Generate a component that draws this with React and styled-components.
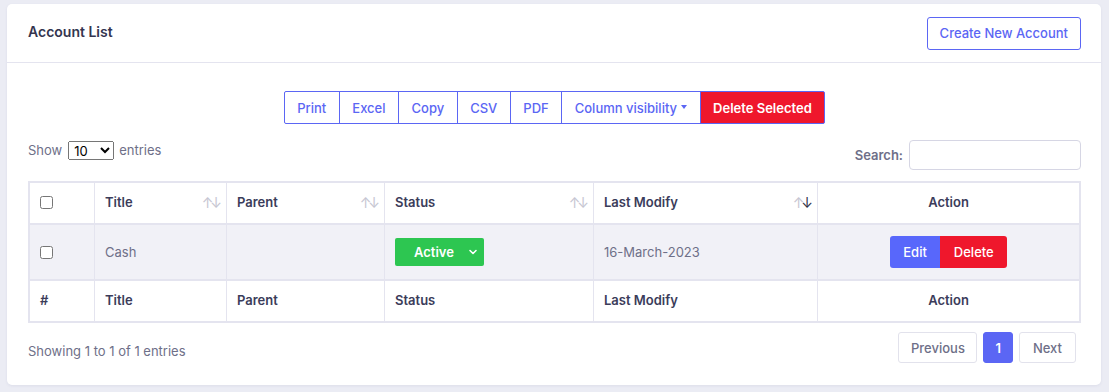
import React from 'react';
import styled, { createGlobalStyle } from 'styled-components';

const Global = createGlobalStyle`
  body {
    margin: 0;
    background: #ebecf4;
    font-family: Inter, "Noto Sans", sans-serif;
    color: #3b3c5a;
  }
`;

const Page = styled.div`
  padding: 4px 8px 6px 7px;
`;

const Card = styled.section`
  background: #fff;
  border-radius: 5px;
  box-shadow: 0 1px 3px rgba(60, 60, 110, 0.08);
`;

const CardHeader = styled.header`
  display: flex;
  align-items: center;
  justify-content: space-between;
  height: 58px;
  padding: 0 20px 0 21px;
  border-bottom: 1px solid #e4e4ef;
`;

const CardTitle = styled.h5`
  margin: 0 0 3px;
  font-size: 14px;
  font-weight: 600;
  color: #34354f;
`;

const OutlineButton = styled.button`
  height: 33px;
  padding: 0 12px;
  background: #fff;
  border: 1px solid #5b66f4;
  border-radius: 3px;
  color: #5b66f4;
  font: 500 13px Inter, sans-serif;
`;

const CardBody = styled.div`
  padding: 28px 20px 22px 21px;
`;

const ToolGroup = styled.div`
  display: flex;
  justify-content: center;
`;

const ToolButton = styled.button`
  height: 33px;
  padding: 0 12.5px;
  background: ${p => (p.$danger ? '#ef172c' : '#fff')};
  border: 1px solid #5b66f4;
  margin-left: -1px;
  color: ${p => (p.$danger ? '#fff' : '#5b66f4')};
  font: ${p => (p.$danger ? 600 : 500)} 13px Inter, sans-serif;
  display: flex;
  align-items: center;
  gap: 4px;
  &:first-child {
    margin-left: 0;
    border-radius: 2px 0 0 2px;
  }
  &:last-child {
    border-radius: 0 2px 2px 0;
  }
`;

const Caret = styled.span`
  width: 0;
  height: 0;
  border-left: 3.5px solid transparent;
  border-right: 3.5px solid transparent;
  border-top: 4px solid currentColor;
  margin-top: -2px;
`;

const Controls = styled.div`
  display: flex;
  justify-content: space-between;
  align-items: flex-start;
  margin-top: 16px;
`;

const Label = styled.label`
  display: flex;
  align-items: center;
  gap: ${p => (p.$bold ? 4 : 5)}px;
  font-size: 13px;
  color: #6e6f88;
  font-weight: ${p => (p.$bold ? 600 : 400)};
`;

const LengthSelect = styled.select`
  width: 46px;
  height: 19px;
  font: 13px Inter, sans-serif;
  color: #000;
  padding: 0 1px;
  margin: 1px 0 0 1px;
`;

const SearchInput = styled.input`
  width: 172px;
  height: 30px;
  box-sizing: border-box;
  border: 1px solid #d6d6e4;
  border-radius: 4px;
  margin-left: 2px;
`;

const Table = styled.table`
  width: 100%;
  margin-top: 11px;
  border-collapse: collapse;
  border: 2px solid #e4e4ef;
  font-size: 13px;
`;

const Row = styled.tr`
  background: ${p => (p.$shaded ? '#f1f1f7' : '#fff')};
  border-bottom: 2px solid #e4e4ef;
`;

const Th = styled.th`
  position: relative;
  height: 38px;
  padding: 0 10px 2px;
  text-align: ${p => p.$align || 'left'};
  font-weight: 600;
  color: #3b3c5a;
  border-left: 1px solid #e4e4ef;
  vertical-align: middle;
`;

const Td = styled.td`
  height: 54px;
  padding: 0 10px;
  color: #6e6f88;
  border-left: 1px solid #e4e4ef;
  text-align: ${p => p.$align || 'left'};
  vertical-align: middle;
`;

const Check = styled.input`
  margin: 0;
  width: 13px;
  height: 13px;
  display: block;
`;

const SortIcon = styled.span`
  position: absolute;
  right: 7px;
  top: 50%;
  transform: translateY(-50%);
  display: flex;
  font-size: 14px;
  line-height: 1;
  letter-spacing: -3px;
  font-weight: 400;
  span {
    color: #c6c6d2;
  }
  span.on {
    color: #2f3048;
  }
`;

const StatusSelect = styled.div`
  width: 89px;
  height: 28px;
  border-radius: 2px;
  background: #2dc651;
  color: #fff;
  font-weight: 600;
  font-size: 13px;
  display: flex;
  align-items: center;
  justify-content: space-between;
  padding: 0 6px 0 19px;
  box-sizing: border-box;
`;

const ActionGroup = styled.div`
  display: inline-flex;
  border-radius: 3px;
  overflow: hidden;
`;

const SolidButton = styled.button`
  height: 32px;
  padding: 0 13.5px;
  border: none;
  background: ${p => p.$bg};
  color: #fff;
  font: 500 13px Inter, sans-serif;
`;

const Footer = styled.div`
  display: flex;
  justify-content: space-between;
  align-items: flex-start;
  margin-top: 9px;
`;

const Info = styled.div`
  font-size: 13px;
  color: #6e6f88;
  margin-top: 11px;
`;

const Pager = styled.div`
  display: flex;
  gap: 6px;
  margin-right: 5px;
`;

const PageButton = styled.button`
  height: 31px;
  padding: 0 ${p => p.$pad}px;
  border: 1px solid ${p => (p.$active ? '#5b66f4' : '#e2e2ec')};
  border-radius: 3px;
  background: ${p => (p.$active ? '#5b66f4' : '#fff')};
  color: ${p => (p.$active ? '#fff' : '#6e6f88')};
  font: ${p => (p.$active ? 600 : 500)} 13px Inter, sans-serif;
`;

const Sort = ({ desc }) => (
  <SortIcon>
    <span>↑</span>
    <span className={desc ? 'on' : ''}>↓</span>
  </SortIcon>
);

const Chevron = () => (
  <svg width="10" height="10" viewBox="0 0 10 10">
    <path d="M2 3.5 L5 6.5 L8 3.5" fill="none" stroke="#fff" strokeWidth="1.6" strokeLinecap="round" strokeLinejoin="round" />
  </svg>
);

const columns = [
  { key: 'check', width: 44 },
  { key: 'Title', width: 111, sort: true },
  { key: 'Parent', width: 137, sort: true },
  { key: 'Status', width: 188, sort: true },
  { key: 'Last Modify', width: 203, sort: true, desc: true },
  { key: 'Action', align: 'center' },
];

export default function App() {
  return (
    <Page>
      <Global />
      <Card>
        <CardHeader>
          <CardTitle>Account List</CardTitle>
          <OutlineButton>Create New Account</OutlineButton>
        </CardHeader>
        <CardBody>
          <ToolGroup>
            <ToolButton>Print</ToolButton>
            <ToolButton>Excel</ToolButton>
            <ToolButton>Copy</ToolButton>
            <ToolButton>CSV</ToolButton>
            <ToolButton>PDF</ToolButton>
            <ToolButton>Column visibility <Caret /></ToolButton>
            <ToolButton $danger>Delete Selected</ToolButton>
          </ToolGroup>

          <Controls>
            <Label>
              Show
              <LengthSelect defaultValue="10">
                <option>10</option>
                <option>25</option>
                <option>50</option>
              </LengthSelect>
              entries
            </Label>
            <Label $bold>
              Search:
              <SearchInput type="search" />
            </Label>
          </Controls>

          <Table>
            <thead>
              <Row>
                {columns.map(c => (
                  <Th key={c.key} $align={c.align} style={c.width ? { width: c.width } : undefined}>
                    {c.key === 'check' ? <Check type="checkbox" /> : c.key}
                    {c.sort && <Sort desc={c.desc} />}
                  </Th>
                ))}
              </Row>
            </thead>
            <tbody>
              <Row $shaded>
                <Td><Check type="checkbox" /></Td>
                <Td>Cash</Td>
                <Td />
                <Td>
                  <StatusSelect>Active <Chevron /></StatusSelect>
                </Td>
                <Td>16-March-2023</Td>
                <Td $align="center">
                  <ActionGroup>
                    <SolidButton $bg="#5867fb">Edit</SolidButton>
                    <SolidButton $bg="#ef172c">Delete</SolidButton>
                  </ActionGroup>
                </Td>
              </Row>
            </tbody>
            <tfoot>
              <Row>
                {['#', 'Title', 'Parent', 'Status', 'Last Modify', 'Action'].map((h, i) => (
                  <Th key={h} $align={i === 5 ? 'center' : 'left'}>{h}</Th>
                ))}
              </Row>
            </tfoot>
          </Table>

          <Footer>
            <Info>Showing 1 to 1 of 1 entries</Info>
            <Pager>
              <PageButton $pad={11.5}>Previous</PageButton>
              <PageButton $pad={11} $active>1</PageButton>
              <PageButton $pad={13}>Next</PageButton>
            </Pager>
          </Footer>
        </CardBody>
      </Card>
    </Page>
  );
}
